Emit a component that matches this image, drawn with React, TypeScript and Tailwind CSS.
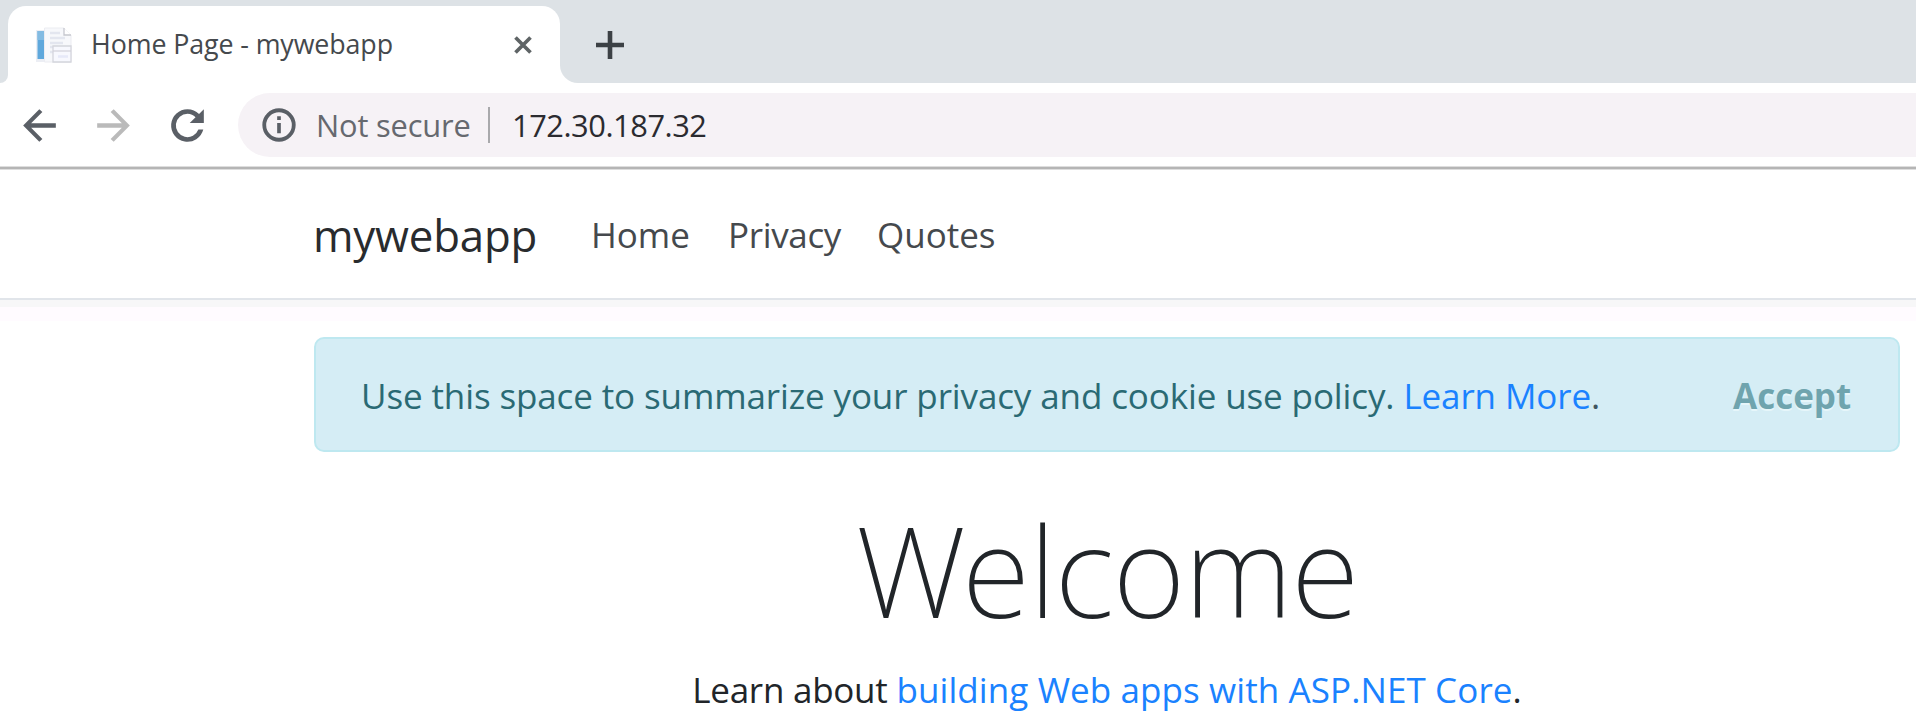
import type { ReactNode } from 'react';

function Glyph({ d, className }: { d: string; className: string }) {
  return (
    <svg viewBox="0 0 24 24" className={`shrink-0 fill-current ${className}`}>
      <path d={d} />
    </svg>
  );
}

const BACK = 'M20 10.9H7.9l5.5-5.5L11.9 4 4 12l7.9 8 1.5-1.4-5.5-5.5H20z';
const FORWARD = 'M4 10.9h12.1l-5.5-5.5L12.1 4 20 12l-7.9 8-1.5-1.4 5.5-5.5H4z';
const RELOAD =
  'M17.65 6.35A7.96 7.96 0 0 0 12 4a8 8 0 1 0 7.73 10h-2.4A5.7 5.7 0 1 1 12 6.3c1.6 0 2.9.6 3.95 1.65L13.1 10.8H20V4z';
const INFO =
  'M10.900 6.800h2.200v2.200h-2.200zm0 4h2.200v6.200h-2.200zM12 2a10 10 0 1 0 0 20 10 10 0 0 0 0-20zm0 17.700a7.700 7.700 0 1 1 0-15.400 7.700 7.700 0 0 1 0 15.400z';

function Favicon() {
  return (
    <svg viewBox="0 0 36 36" className="size-9 shrink-0">
      <rect x="0" y="3" width="8" height="32" fill="#eceef4" />
      <rect x="1.5" y="4" width="7" height="28" fill="#5fa8dc" />
      <rect x="1.5" y="4" width="7" height="9" fill="#83bbe2" />
      <path d="M8.500 1H28l7 7v27H8.500z" fill="#f7f8fb" stroke="#ebecf1" strokeWidth="1" />
      <path d="M28 1v7h7" fill="#fff" stroke="#c6c7ce" strokeWidth="1.300" />
      <path d="M14 6h10M14 11h15M14 16h13M14 20h8M14 25h3" stroke="#e3e6ef" strokeWidth="2.500" />
      <path d="M17 19h18v16H17z" fill="#f7f8fe" stroke="#d4d5dc" strokeWidth="1.300" />
      <path d="M17 24h18" stroke="#d0d1d9" strokeWidth="1.200" />
      <path d="M22 29.500h10" stroke="#e6e9f8" strokeWidth="2.500" />
    </svg>
  );
}

function TabStrip() {
  return (
    <div className="flex h-[83px] bg-[#dde2e6] pt-[5px]">
      <div className="flex w-2 items-end overflow-hidden bg-white">
        <div className="h-full w-full rounded-br-[18px] bg-[#dde2e6]" />
      </div>
      <div className="mt-[0.5px] flex h-[78px] w-[552px] items-center rounded-t-[18px] bg-white pl-7">
        <Favicon />
        <span className="-mt-px ml-[19px] w-[421px] text-[26.8px] leading-9 tracking-[-0.1px] whitespace-nowrap text-[#45494d]">
          Home Page - mywebapp
        </span>
        <svg viewBox="0 0 20 20" className="ml-px size-5 shrink-0">
          <path d="M2.500 2.500l15 15M17.500 2.500l-15 15" stroke="#5f6466" strokeWidth="3.700" />
        </svg>
      </div>
      <div className="flex-1 bg-white">
        <div className="flex h-[78px] items-center rounded-bl-[18px] bg-[#dde2e6] pt-0.5 pl-[36px]">
          <svg viewBox="0 0 28 28" className="size-7">
            <path d="M14 0v28M0 14h28" stroke="#3c4145" strokeWidth="4.600" />
          </svg>
        </div>
      </div>
    </div>
  );
}

function Toolbar() {
  return (
    <div className="flex h-[84px] items-center bg-white pl-[15px]">
      <Glyph d={BACK} className="size-[49px] text-[#5a5f66]" />
      <Glyph d={FORWARD} className="ml-[25px] size-[49px] text-[#bababa]" />
      <Glyph d={RELOAD} className="ml-[25px] size-[49px] text-[#5a5f66]" />
      <div className="ml-[26px] flex h-16 flex-1 items-center rounded-l-full bg-[#f6f2f6] pl-[21px]">
        <Glyph d={INFO} className="size-10 text-[#5a5f66]" />
        <span className="ml-[17px] w-[172px] text-[30.8px] leading-10 tracking-[-0.15px] whitespace-nowrap text-[#66696f]">
          Not secure
        </span>
        <span className="h-9 w-0.5 bg-[#a9a9ac]" />
        <span className="ml-[22px] text-[30.8px] leading-10 tracking-[-0.45px] whitespace-nowrap text-[#2b2b30]">
          172.30.187.32
        </span>
      </div>
    </div>
  );
}

function NavLink({ className, children }: { className: string; children: ReactNode }) {
  return (
    <a className={`text-[35px] leading-[48px] whitespace-nowrap text-[#45494d] ${className}`}>
      {children}
    </a>
  );
}

function SiteHeader() {
  return (
    <header>
      <div className="flex h-[130px] items-center border-b-2 border-[#e1e5ea] bg-white pt-0.5 pl-[313px]">
        <a className="w-[278px] text-[43.8px] leading-[60px] tracking-[-0.2px] whitespace-nowrap text-[#292b2e]">
          mywebapp
        </a>
        <NavLink className="w-[137px]">Home</NavLink>
        <NavLink className="w-[149px] tracking-[-0.35px]">Privacy</NavLink>
        <NavLink className="">Quotes</NavLink>
      </div>
      <div className="h-[7px] bg-[#f7f7f8]" />
      <div className="h-[14px] bg-[#fffbff]" />
    </header>
  );
}

function CookieNotice() {
  return (
    <div className="mt-[16px] ml-[314px] flex h-[115px] w-[1586px] items-center rounded-[10px] border-2 border-[#bee8f0] bg-[#d5edf5] pt-0.5 pl-[45px] text-[35px] leading-[48px] whitespace-nowrap text-[#2a6a74]">
      <span className="w-[1372px] tracking-[-0.12px]">
        Use this space to summarize your privacy and cookie use policy.{' '}
        <a className="text-[#1a82ff]">Learn More</a>
        <span className="text-[#3f5560]">.</span>
      </span>
      <button className="font-bold text-[#6fa4ae] [text-shadow:0_2px_0_#e6f6fa]">Accept</button>
    </div>
  );
}

export default function App() {
  return (
    <div className="h-[727px] w-full overflow-hidden bg-white font-['Open_Sans',sans-serif]">
      <TabStrip />
      <Toolbar />
      <div className="-mt-px h-1 border-y border-[#dedede] bg-[#b5b5b5]" />
      <SiteHeader />
      <CookieNotice />
      <main className="ml-[314px] w-[1586px] text-center text-[#212529]">
        <h1 className="mt-[48px] font-['Noto_Sans',sans-serif] text-[125px] leading-[140px] font-extralight tracking-[-1.3px]">
          Welcome
        </h1>
        <p className="mt-[26px] text-[35px] leading-[48px]">
          <span className="tracking-[-0.25px]">Learn about </span>
          <a className="tracking-[0.1px] text-[#1a82ff]">building Web apps with ASP.NET Core</a>.
        </p>
      </main>
    </div>
  );
}
